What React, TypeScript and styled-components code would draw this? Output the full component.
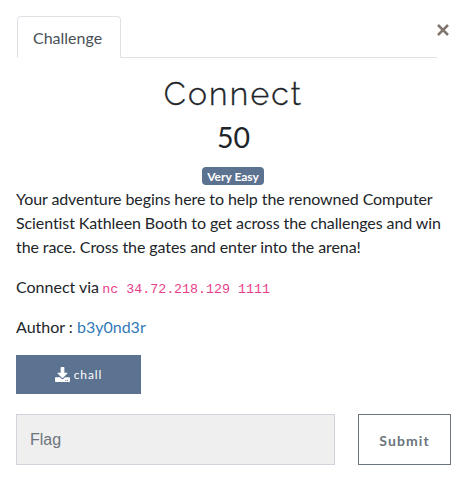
import React from "react";
import styled, { createGlobalStyle } from "styled-components";

const GlobalStyle = createGlobalStyle`
  *, *::before, *::after { box-sizing: border-box; }
  body {
    margin: 0;
    background: #fff;
    color: #212529;
    font-family: Lato, sans-serif;
    font-size: 16px;
    line-height: 24px;
    font-variant-ligatures: none;
  }
`;

const Modal = styled.main`
  width: 466px;
  height: 497px;
  padding: 16px 15px 0 16px;
  overflow: hidden;
`;

const Header = styled.header`
  display: flex;
  align-items: flex-start;
  height: 42px;
`;

const Tabs = styled.nav`
  display: flex;
  width: 420px;
  height: 42px;
  margin-left: 1px;
  border-bottom: 1px solid #dee2e6;
`;

const Tab = styled.a`
  width: 104px;
  height: 42px;
  padding: 9px 0 0 15px;
  border: 1px solid #dee2e6;
  border-bottom-color: #fff;
  border-radius: 4px 4px 0 0;
  background: #fff;
  color: #495057;
`;

const CloseButton = styled.button`
  width: 12px;
  height: 24px;
  margin-top: 2px;
  padding: 0;
  border: 0;
  background: none;
  color: #80766d;
  display: flex;
  align-items: center;
  justify-content: center;
`;

const Title = styled.h2`
  margin: 17px 0 0;
  font-family: Raleway, Lato, sans-serif;
  font-weight: 300;
  font-size: 32px;
  line-height: 38px;
  letter-spacing: 2.2px;
  text-align: center;
  -webkit-text-stroke: 0.35px currentColor;
`;

const Points = styled.h3`
  margin: 5px 0 0;
  font-weight: 400;
  font-size: 28.5px;
  line-height: 38px;
  text-align: center;
`;

const BadgeRow = styled.div`
  display: flex;
  justify-content: center;
  margin-top: 11px;
  padding-right: 1px;
`;

const Badge = styled.span`
  width: 62px;
  height: 18px;
  border-radius: 4px;
  background: #5b7290;
  color: #fff;
  font-size: 12px;
  font-weight: 700;
  line-height: 20px;
  text-align: center;
  white-space: nowrap;
`;

const Description = styled.p`
  margin: 0 0 16px;
  white-space: nowrap;
`;

const FirstDescription = styled(Description)`
  margin-top: 2px;
  letter-spacing: -0.085px;
`;

const Command = styled.code`
  margin-left: -1px;
  color: #e83e8c;
  font-family: Consolas, "Liberation Mono", monospace;
  font-size: 13.33px;
  line-height: 1;
`;

const AuthorLink = styled.a`
  color: #337ab7;
`;

const DownloadButton = styled.a`
  display: flex;
  align-items: center;
  justify-content: center;
  gap: 4px;
  width: 125px;
  height: 39px;
  background: #5b7290;
  color: #fff;
  font-size: 12px;
  letter-spacing: 0.9px;
`;

const FlagForm = styled.form`
  display: flex;
  justify-content: space-between;
  margin-top: 20px;
`;

const FlagInput = styled.input`
  width: 319px;
  height: 51px;
  padding: 0 13px;
  border: 1px solid #ced4da;
  border-radius: 0;
  background: #efefef;
  font: 16px "Liberation Sans", Arial, sans-serif;
  &::placeholder { color: #6c757d; opacity: 1; }
`;

const SubmitButton = styled.button`
  width: 93px;
  height: 51px;
  padding: 1px 0 0;
  border: 1px solid #6c757d;
  background: #fff;
  color: #6c757d;
  font: 700 14px Lato, sans-serif;
  letter-spacing: 1.1px;
`;

const DownloadIcon = () => (
  <svg width="15" height="15" viewBox="0 0 512 512" fill="currentColor" aria-hidden="true">
    <path d="M216 0h80c13.300 0 24 10.700 24 24v168h87.700c17.800 0 26.700 21.500 14.100 34.100L269.700 378.300c-7.500 7.500-19.800 7.500-27.300 0L90.100 226.100c-12.600-12.600-3.700-34.100 14.100-34.100H192V24c0-13.300 10.700-24 24-24zm296 376v112c0 13.300-10.700 24-24 24H24c-13.300 0-24-10.700-24-24V376c0-13.300 10.700-24 24-24h146.700l49 49c20.100 20.100 52.500 20.100 72.600 0l49-49H488c13.300 0 24 10.700 24 24zm-124 88c0-11-9-20-20-20s-20 9-20 20 9 20 20 20 20-9 20-20zm64 0c0-11-9-20-20-20s-20 9-20 20 9 20 20 20 20-9 20-20z" />
  </svg>
);

const CloseIcon = () => (
  <svg width="12" height="12" viewBox="0 0 12 12" fill="none" stroke="currentColor" strokeWidth="2.5" aria-hidden="true">
    <path d="M1 1l10 10M11 1L1 11" />
  </svg>
);

export default function App() {
  return (
    <>
      <GlobalStyle />
      <Modal>
        <Header>
          <Tabs><Tab>Challenge</Tab></Tabs>
          <CloseButton type="button" aria-label="Close"><CloseIcon /></CloseButton>
        </Header>
        <Title>Connect</Title>
        <Points>50</Points>
        <BadgeRow><Badge>Very Easy</Badge></BadgeRow>
        <FirstDescription>
          Your adventure begins here to help the renowned Computer<br />
          Scientist Kathleen Booth to get across the challenges and win<br />
          the race. Cross the gates and enter into the arena!
        </FirstDescription>
        <Description>Connect via <Command>nc 34.72.218.129 1111</Command></Description>
        <Description>Author : <AuthorLink>b3y0nd3r</AuthorLink></Description>
        <DownloadButton><DownloadIcon />chall</DownloadButton>
        <FlagForm>
          <FlagInput placeholder="Flag" aria-label="Flag" />
          <SubmitButton type="button">Submit</SubmitButton>
        </FlagForm>
      </Modal>
    </>
  );
}
